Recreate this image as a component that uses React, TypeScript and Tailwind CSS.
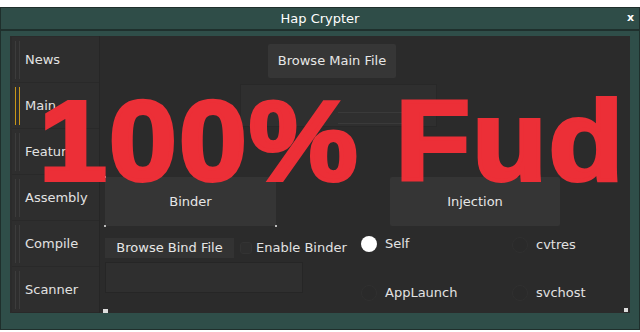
import React from 'react';

const tabs = ['News', 'Main', 'Features', 'Assembly', 'Compile', 'Scanner'];

const Tab = ({ label, active }: { label: string; active?: boolean }) => (
  <div className="h-[46px] flex items-center border-b border-[#292929] bg-[#2e2e2e]">
    <div className="flex h-[38px] ml-[2px] gap-[3px] px-px">
      <div className={active ? 'w-px bg-[#c8961a]' : 'w-px bg-[#3c3c3c]'} />
      <div className={active ? 'w-px bg-[#c8961a]' : 'w-px bg-[#3c3c3c]'} />
    </div>
    <span className="ml-[4px] text-[13px] text-[#e2e2e2] whitespace-nowrap">{label}</span>
  </div>
);

const Radio = ({ label, on }: { label: string; on?: boolean }) => (
  <div className="flex items-center h-4">
    <div className={on ? 'w-4 h-4 rounded-full bg-white shrink-0' : 'w-4 h-4 rounded-full bg-[#2a2a2a] border border-[#303030] shrink-0'} />
    <span className="ml-2 text-[13px] text-[#e2e2e2] whitespace-nowrap">{label}</span>
  </div>
);

const Corners = () => (
  <>
    <span className="absolute -left-px -top-px w-[2px] h-[2px] bg-[#bbb]" />
    <span className="absolute -right-px -top-px w-[2px] h-[2px] bg-[#bbb]" />
    <span className="absolute -left-px -bottom-px w-[2px] h-[2px] bg-[#bbb]" />
    <span className="absolute -right-px -bottom-px w-[2px] h-[2px] bg-[#bbb]" />
  </>
);

export default function App() {
  return (
    <div className="w-[640px] h-[332px] bg-white overflow-hidden" style={{ fontFamily: '"DejaVu Sans", "Noto Sans", sans-serif' }}>
      <div className="mt-[7px] h-[323px] bg-[#2f4e49] border border-[#1f2f2c] flex flex-col">
        <div className="h-[21px] relative flex items-center justify-center bg-[#2f4d48]">
          <span className="text-[13px] text-white">Hap Crypter</span>
          <span className="absolute right-[5px] top-[2px] text-[11px] font-bold text-white">x</span>
        </div>
        <div className="h-[2px] bg-[#1f302d]" />
        <div className="flex-1 px-[9px] pt-[5px] pb-[16px] relative">
          <div className="h-full bg-[#2b2b2b] flex relative">
            <div className="w-[90px] pl-[2px] pt-px border-r border-[#262626] flex flex-col">
              {tabs.map((t) => (
                <Tab key={t} label={t} active={t === 'Main'} />
              ))}
            </div>
            <div className="flex-1 relative">
              <div className="flex ml-[168px] mt-[8px]">
                <div className="w-[128px] h-[34px] bg-[#363636] rounded-[2px] flex items-center justify-center text-[13px] text-[#e6e6e6]">
                  Browse Main File
                </div>
              </div>
              <div className="ml-[140px] mt-[6px] w-[197px] h-[43px] bg-[#2f2f2f] border border-[#282828] flex items-end justify-end pr-[28px] pb-[2px]">
                <div className="w-[70px] h-[12px] border-y border-[#3a3a3a]" />
              </div>
              <div className="flex mt-[50px]">
                <div className="ml-[5px] relative w-[171px] h-[49px] bg-[#353535] flex items-center justify-center text-[13px] text-[#e6e6e6]">
                  <Corners />
                  Binder
                </div>
                <div className="ml-[114px] w-[170px] h-[49px] bg-[#353535] rounded-[2px] flex items-center justify-center text-[13px] text-[#e6e6e6]">
                  Injection
                </div>
              </div>
              <div className="flex mt-[12px]">
                <div className="ml-[5px] w-[198px] shrink-0 flex flex-col">
                  <div className="flex items-center">
                    <div className="shrink-0 w-[129px] h-[20px] bg-[#333333] flex items-center justify-center text-[13px] text-[#e6e6e6] whitespace-nowrap">
                      Browse Bind File
                    </div>
                    <div className="shrink-0 ml-[6px] w-[12px] h-[12px] rounded-[3px] bg-[#2e2e2e] border border-[#333]" />
                    <span className="ml-[4px] text-[13px] text-[#e2e2e2] whitespace-nowrap">Enable Binder</span>
                  </div>
                  <div className="mt-[4px] w-[198px] h-[31px] bg-[#2f2f2f] border border-[#262626]" />
                </div>
                <div className="ml-[58px] w-[98px] shrink-0 flex flex-col gap-[33px] -mt-[2px]">
                  <Radio label="Self" on />
                  <Radio label="AppLaunch" />
                </div>
                <div className="ml-[53px] flex flex-col gap-[32px] -mt-[1px]">
                  <Radio label="cvtres" />
                  <Radio label="svchost" />
                </div>
              </div>
              <span className="absolute left-[3px] bottom-0 w-[5px] h-[4px] bg-[#ddd]" />
              <span className="absolute right-[2px] bottom-[1px] w-[4px] h-[4px] bg-[#ddd]" />
            </div>
          </div>
          <div
            className="absolute left-[38px] top-[53px] origin-left scale-x-[1.07] text-[114px] font-bold leading-none text-[#ec2f37] pointer-events-none whitespace-nowrap tracking-[2px] [-webkit-text-stroke:4px_#ec2f37]"
            style={{ fontFamily: '"Liberation Sans", Arial, sans-serif' }}
          >
            100% Fud
          </div>
        </div>
      </div>
    </div>
  );
}
